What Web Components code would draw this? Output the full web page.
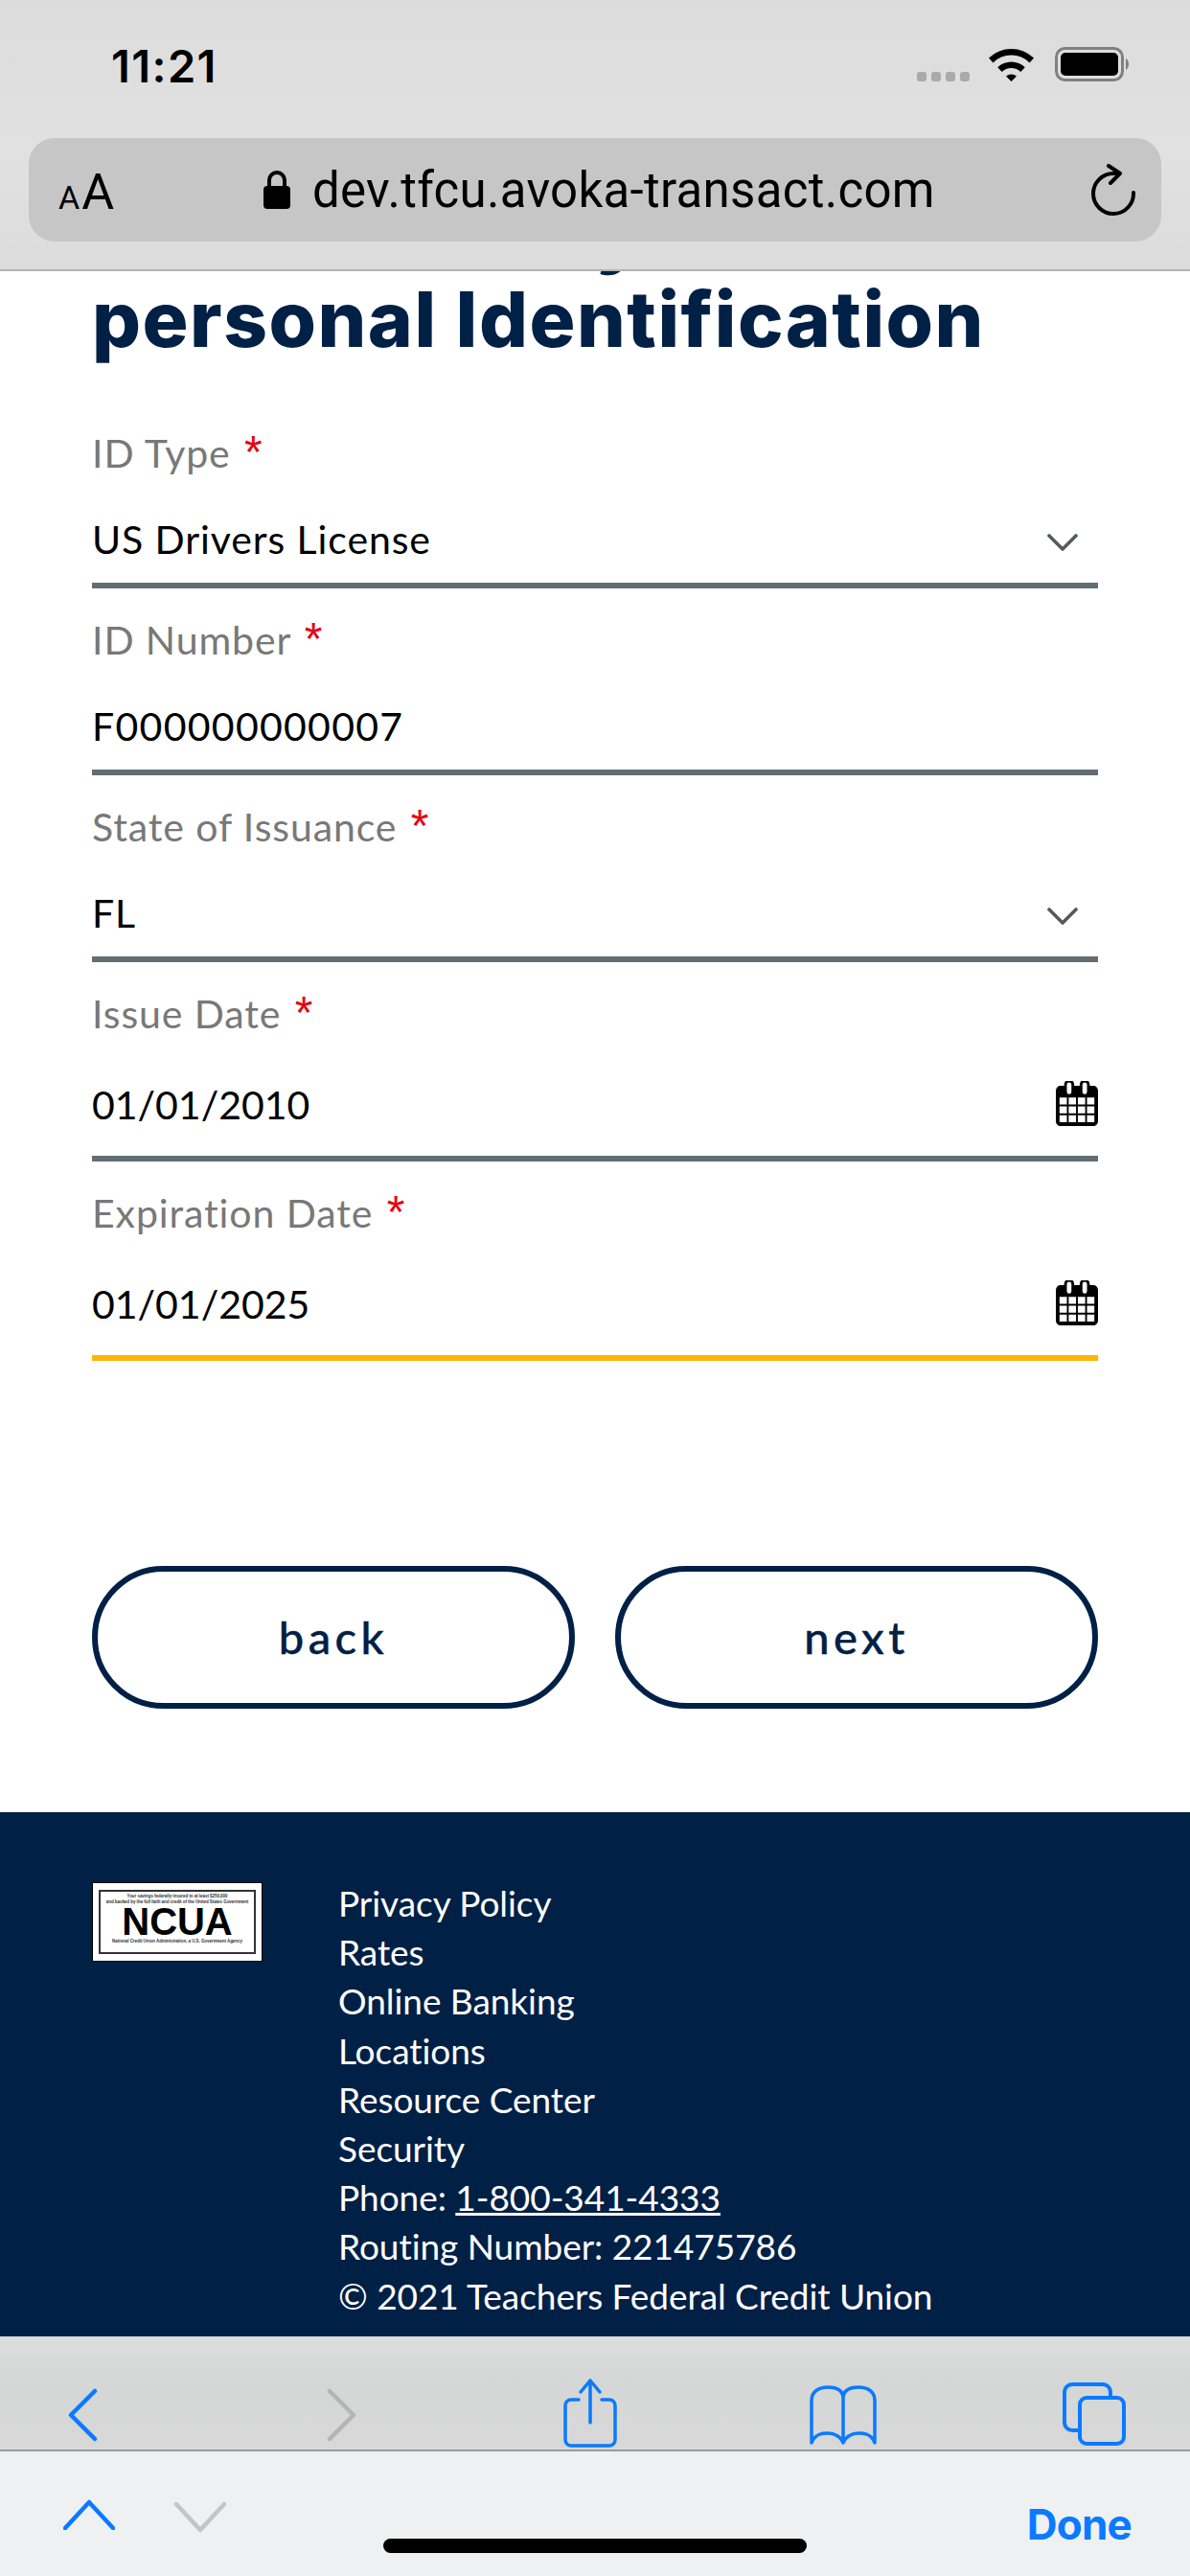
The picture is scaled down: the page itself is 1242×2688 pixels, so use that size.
<!DOCTYPE html>
<html lang="en">
<head>
<meta charset="utf-8">
<title>personal Identification</title>
<style>
  html, body { margin: 0; padding: 0; background: #fff; }
  body { width: 1242px; height: 2688px; overflow: hidden; display: flex; flex-direction: column; font-family: Lato, sans-serif; }
  site-footer a { color: #fff; }
</style>
</head>
<body>
  <browser-top></browser-top>
  <form-page>
    <form-field label="ID Type" kind="select">US Drivers License</form-field>
    <form-field label="ID Number" style="--spacing: 1.3px">F000000000007</form-field>
    <form-field label="State of Issuance" kind="select">FL</form-field>
    <form-field label="Issue Date" kind="date" style="--spacing: 0">01/01/2010</form-field>
    <form-field label="Expiration Date" kind="date" focused style="--spacing: 0">01/01/2025</form-field>
    <pill-button slot="actions">back</pill-button>
    <pill-button slot="actions">next</pill-button>
  </form-page>
  <site-footer>
    <span>Privacy Policy</span>
    <span>Rates</span>
    <span>Online Banking</span>
    <span>Locations</span>
    <span>Resource Center</span>
    <span>Security</span>
    <span>Phone: <a href="#">1-800-341-4333</a></span>
    <span>Routing Number: 221475786</span>
    <span>© 2021 Teachers Federal Credit Union</span>
  </site-footer>
  <browser-toolbar></browser-toolbar>
  <keyboard-bar></keyboard-bar>

<script>
const define = (tag, html, setup) => {
  customElements.define(tag, class extends HTMLElement {
    constructor() {
      super()
      const t = document.createElement('template')
      t.innerHTML = html
      this.attachShadow({ mode: 'open' }).appendChild(t.content.cloneNode(true))
    }
    connectedCallback() {
      if (setup) setup(this, this.shadowRoot)
    }
  })
}

const BLUE = '#0a7aff'
const NAVY = '#012046'

define('browser-top', `
  <style>
    :host {
      display: block; height: 283px; box-sizing: border-box; flex: none;
      background: linear-gradient(#dcdcdc, #e1e1e1 55%, #dcdcdc);
      border-bottom: 2px solid #b4b4b4;
      color: #000; font-family: Inter, sans-serif;
    }
    .status { height: 144px; box-sizing: border-box; display: flex; padding: 44px 61px 0 116px; }
    .time { font-size: 47px; line-height: 50px; font-weight: 600; letter-spacing: 1.4px; flex: 1; }
    .dots { display: flex; gap: 5px; margin: 31px 20px 0 0; }
    .dots i { width: 10px; height: 10px; border-radius: 3px; background: #aaa; }
    .wifi { margin: 5px 22px 0 0; }
    .battery { margin-top: 5px; }
    .url {
      height: 108px; margin: 0 30px; border-radius: 27px; background: #c6c6c6;
      display: flex; align-items: center; position: relative; padding-left: 31px;
    }
    .aa { width: 214px; display: flex; align-items: baseline; font-family: Roboto, sans-serif; font-weight: 400; margin-top: 4px; }
    .aa small { font-size: 34px; margin-right: 2px; }
    .aa b { font-weight: 400; font-size: 52px; }
    .addr { font-size: 51px; font-family: Roboto, sans-serif; margin-left: 23px; letter-spacing: .3px; flex: 1; }
    .reload { margin-right: 27px; }
  </style>
  <div class="status">
    <span class="time">11:21</span>
    <span class="dots"><i></i><i></i><i></i><i></i></span>
    <svg class="wifi" width="47" height="36" viewBox="0 0 47 36">
      <path d="M0 11.500 A34 34 0 0 1 47 11.500 L42.600 16.400 A27 27 0 0 0 4.400 16.400Z"/>
      <path d="M9.200 21.200 A20.500 20.500 0 0 1 37.800 21.200 L33.300 26 A14 14 0 0 0 13.700 26Z"/>
      <path d="M18 30.600 A8 8 0 0 1 29 30.600 L23.500 36Z"/>
    </svg>
    <svg class="battery" width="80" height="36" viewBox="0 0 80 36">
      <rect x="1.500" y="1.500" width="69" height="33" rx="9" fill="none" stroke="#808080" stroke-width="3"/>
      <rect x="6" y="6" width="60" height="24" rx="5"/>
      <path d="M74 12 C78 14 78 22 74 24Z" fill="#808080"/>
    </svg>
  </div>
  <div class="url">
    <span class="aa"><small>A</small><b>A</b></span>
    <svg width="28" height="40" viewBox="0 0 28 40">
      <path d="M6 18 V10 a8 8 0 0 1 16 0 V18" fill="none" stroke="#000" stroke-width="4"/>
      <rect x="0" y="16" width="28" height="24" rx="4"/>
    </svg>
    <span class="addr">dev.tfcu.avoka-transact.com</span>
    <svg class="reload" width="46" height="54" viewBox="0 0 46 54" fill="none" stroke="#000" stroke-width="4" stroke-linecap="round" stroke-linejoin="round">
      <path d="M44 30 A21 21 0 1 1 23 10 H29"/>
      <path d="M18 2 L30 10 L20 20"/>
    </svg>
  </div>
`)

define('form-page', `
  <style>
    :host { display: block; flex: 1; min-height: 0; overflow: hidden; padding: 0 96px; background: #fff; }
    h1 {
      margin: -87px 0 0; font: 800 80px/91px Inter, sans-serif; color: ${NAVY};
      letter-spacing: 1.5px; height: 223px; white-space: nowrap;
    }
    h1 span { display: block; }
    h1 .prev { padding-left: 526px; }
    .actions { display: flex; gap: 42px; margin-top: 214px; }
  </style>
  <h1><span class="prev">y</span><span>personal Identification</span></h1>
  <slot></slot>
  <div class="actions"><slot name="actions"></slot></div>
`)

define('form-field', `
  <style>
    :host { display: block; color: #000; }
    .label { padding-top: 24px; font-size: 41px; line-height: 60px; color: #787878; font-weight: 400; letter-spacing: .9px; }
    .label i { font-style: normal; color: #e30613; margin-left: 3px; font: 400 48px/1px "Liberation Sans", sans-serif; }
    .row {
      display: flex; align-items: center; justify-content: space-between;
      padding: 31px 0 16px; border-bottom: 6px solid #636e72; font-size: 41px; line-height: 58px;
      letter-spacing: var(--spacing, .9px);
    }
    :host([kind=date]) .row { padding: 36px 0 24px; }
    :host([focused]) .row { border-bottom-color: #fdb507; }
    svg { display: block; flex: none; }
    .chev { margin: 5px 21px 0 0; }
    .cal { margin-top: -3px; }
  </style>
  <div class="label"><span id="label"></span> <i>*</i></div>
  <div class="row"><span><slot></slot></span><span id="icon"></span></div>
`, (el, root) => {
  root.getElementById('label').textContent = el.getAttribute('label')
  const kind = el.getAttribute('kind')
  const icon = root.getElementById('icon')
  if (kind === 'select') {
    icon.innerHTML = `<svg class="chev" width="32" height="20" viewBox="0 0 32 20" fill="none" stroke="#555a5d" stroke-width="3.600" stroke-linecap="round" stroke-linejoin="round"><path d="M2 3 L16 17 L30 3"/></svg>`
  } else if (kind === 'date') {
    icon.innerHTML = `<svg class="cal" width="44" height="47" viewBox="0 0 46 46" preserveAspectRatio="none">
      <path fill-rule="evenodd" d="M5 5 H9 V4 a5.500 5.500 0 0 1 11 0 V5 H26 V4 a5.500 5.500 0 0 1 11 0 V5 H41 a5 5 0 0 1 5 5 V41 a5 5 0 0 1 -5 5 H5 a5 5 0 0 1 -5 -5 V10 a5 5 0 0 1 5 -5Z
        M12 4 a2.500 2.500 0 0 1 5 0 V11 a2.500 2.500 0 0 1 -5 0Z M29 4 a2.500 2.500 0 0 1 5 0 V11 a2.500 2.500 0 0 1 -5 0Z"/>
      <path fill="#fff" d="M4 17h8v7H4zM14 17h8v7h-8zM24 17h8v7h-8zM34 17h8v7h-8zM4 26h8v7H4zM14 26h8v7h-8zM24 26h8v7h-8zM34 26h8v7h-8zM4 35h8v7H4zM14 35h8v7h-8zM24 35h8v7h-8zM34 35h8v7h-8z"/>
    </svg>`
  }
})

define('pill-button', `
  <style>
    :host {
      display: flex; flex: 1; align-items: center; justify-content: center;
      height: 149px; box-sizing: border-box; border: 6px solid ${NAVY}; border-radius: 75px;
      color: ${NAVY}; font: 500 47px/1 Lato, sans-serif; letter-spacing: 4.500px; -webkit-text-stroke: .4px ${NAVY};
    }
  </style>
  <slot></slot>
`)

define('ncua-badge', `
  <style>
    :host {
      display: block; width: 178px; height: 83px; box-sizing: border-box; flex: none;
      background: #fff; border: 1px solid #000; padding: 7px 6px;
    }
    .in {
      height: 100%; box-sizing: border-box; border: 2px solid #333; color: #000;
      display: flex; flex-direction: column; align-items: center;
      font-family: "Liberation Sans", sans-serif; text-align: center; white-space: nowrap;
    }
    small { display: block; font-size: 4.500px; line-height: 6px; font-weight: 700; color: #333; }
    .top { margin-top: 2px; }
    b { font-size: 40px; line-height: 34px; margin: 0 0 1px; }
  </style>
  <div class="in">
    <small class="top">Your savings federally insured to at least $250,000<br>and backed by the full faith and credit of the United States Government</small>
    <b>NCUA</b>
    <small>National Credit Union Administration, a U.S. Government Agency</small>
  </div>
`)

define('site-footer', `
  <style>
    :host {
      display: flex; height: 547px; box-sizing: border-box; flex: none;
      background: ${NAVY}; color: #fff; padding: 69px 0 0 96px;
      font-size: 37px; line-height: 51.200px; letter-spacing: -.05px;
    }
    ncua-badge { margin: 4px 79px 0 0; }
    .links { display: flex; flex-direction: column; }
    ::slotted(span) { display: block; white-space: nowrap; }
  </style>
  <ncua-badge></ncua-badge>
  <div class="links"><slot></slot></div>
`)

define('browser-toolbar', `
  <style>
    :host {
      display: flex; height: 120px; box-sizing: border-box; flex: none;
      background: linear-gradient(#dcdddd, #d5d6d6 40%, #d8d8d8);
      border-bottom: 2px solid #9b9b9b; padding-top: 42px; position: relative;
    }
    svg { display: block; flex: none; overflow: visible; }
  </style>
  <svg style="margin:13px 0 0 71px" width="30" height="54" viewBox="0 0 30 54" fill="none" stroke="${BLUE}" stroke-width="4.500" stroke-linecap="round" stroke-linejoin="round">
    <path d="M28 2 L3 27 L28 52"/>
  </svg>
  <svg style="margin:13px 0 0 241px" width="30" height="54" viewBox="0 0 30 54" fill="none" stroke="#b5b5b5" stroke-width="4.500" stroke-linecap="round" stroke-linejoin="round">
    <path d="M2 2 L27 27 L2 52"/>
  </svg>
  <svg style="margin:2px 0 0 216px" width="56" height="72" viewBox="0 0 56 72" fill="none" stroke="${BLUE}" stroke-width="3.500" stroke-linecap="round" stroke-linejoin="round">
    <path d="M16 22 H8 a6 6 0 0 0 -6 6 V64 a6 6 0 0 0 6 6 H48 a6 6 0 0 0 6 -6 V28 a6 6 0 0 0 -6 -6 H40"/>
    <path d="M28 46 V2 M18 14 L28 2 L38 14"/>
  </svg>
  <svg style="margin:9px 0 0 201px" width="70" height="62" viewBox="0 0 70 62" fill="none" stroke="${BLUE}" stroke-width="3.500" stroke-linejoin="round">
    <path d="M35 14 C35 5 28 2 19 2 C10 2 2 6 2 16 V60 C6 50 14 50 19 50 C26 50 33 54 35 60 C37 54 44 50 51 50 C56 50 64 50 68 60 V16 C68 6 60 2 51 2 C42 2 35 5 35 14 V60"/>
  </svg>
  <svg style="margin:6px 0 0 194px" width="66" height="66" viewBox="0 0 66 66" fill="none" stroke="${BLUE}" stroke-width="4">
    <path d="M17 50 H10 a8 8 0 0 1 -8 -8 V10 a8 8 0 0 1 8 -8 H42 a8 8 0 0 1 8 8 V15"/>
    <rect x="18" y="16" width="46" height="48" rx="7"/>
  </svg>
`)

define('keyboard-bar', `
  <style>
    :host {
      display: flex; height: 130px; flex: none; background: #eff0f1; position: relative;
      padding: 50px 61px 0 66px; box-sizing: border-box;
    }
    svg { display: block; flex: none; }
    .done { margin-left: auto; color: ${BLUE}; font: 700 44px/52px Inter, sans-serif; letter-spacing: -.8px; }
    .home { position: absolute; left: 400px; top: 91px; width: 442px; height: 15px; border-radius: 8px; background: #000; }
  </style>
  <svg width="54" height="32" viewBox="0 0 54 32" fill="none" stroke="${BLUE}" stroke-width="4.500" stroke-linecap="round" stroke-linejoin="round">
    <path d="M2 30 L27 3 L52 30"/>
  </svg>
  <svg style="margin:3px 0 0 62px" width="54" height="32" viewBox="0 0 54 32" fill="none" stroke="#c4c4c4" stroke-width="4.500" stroke-linecap="round" stroke-linejoin="round">
    <path d="M2 2 L27 29 L52 2"/>
  </svg>
  <span class="done">Done</span>
  <span class="home"></span>
`)
</script>
</body>
</html>
